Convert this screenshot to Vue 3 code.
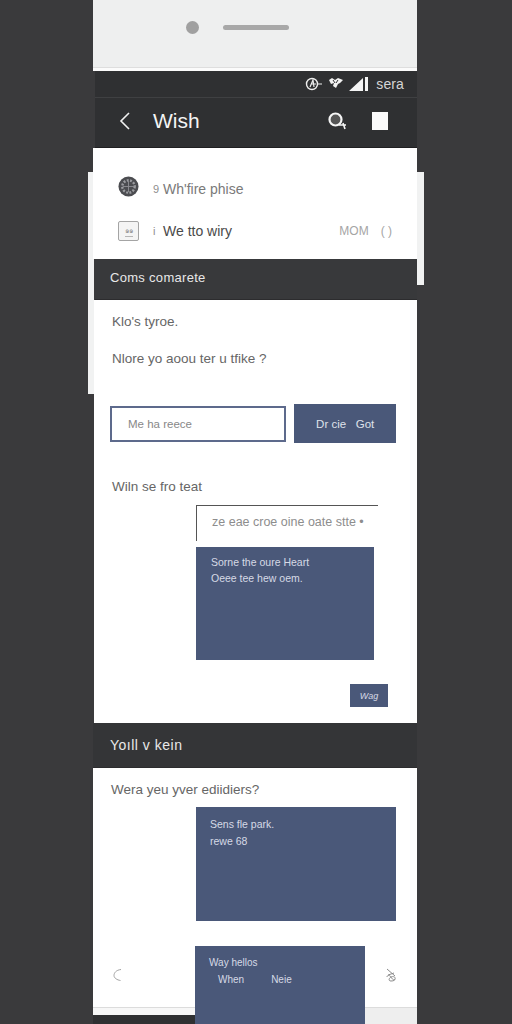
<template>
  <div class="page">
    <div class="ledge ledge-left"></div>
    <div class="ledge ledge-right"></div>

    <div class="phone">
      <!-- hardware top -->
      <div class="hardware">
        <span class="camera"></span>
        <span class="speaker"></span>
      </div>

      <div class="status">
        <svg class="st-icon" width="18" height="16" viewBox="0 0 18 16">
          <circle cx="7" cy="8" r="5.5" fill="none" stroke="#eee" stroke-width="1.4" />
          <path d="M5 11 8 4l1 7M6 8h5M12 8h5" fill="none" stroke="#eee" stroke-width="1.2" />
        </svg>
        <svg class="st-icon" width="16" height="14" viewBox="0 0 16 14">
          <path d="M1 3 4 1l3 2 3-2 5 2-3 3-2 1-2 4-3-2 1-3-3 1z" fill="#f2f2f2" />
          <path d="M5 3l2 3M10 3 8 6" stroke="#2f3032" stroke-width="1" />
        </svg>
        <svg class="st-icon" width="20" height="15" viewBox="0 0 20 15">
          <path d="M0 14 14 1v13zM16 0h3v14h-3z" fill="#f4f4f4" />
        </svg>
        <span class="st-text">sera</span>
      </div>

      <header class="appbar">
        <svg class="back" width="14" height="20" viewBox="0 0 14 20">
          <path d="M11 2 3 10l8 8" fill="none" stroke="#f2f2f2" stroke-width="1.6" />
        </svg>
        <span class="app-title">Wish</span>
        <svg class="search" width="22" height="22" viewBox="0 0 22 22">
          <circle cx="9.500" cy="9.500" r="6" fill="#555" stroke="#f5f5f5" stroke-width="2.200" />
          <path d="M13 15h7M17 13l2 6" stroke="#f5f5f5" stroke-width="1.600" fill="none" />
        </svg>
        <span class="square"></span>
      </header>

      <section class="list">
        <div class="list-row">
          <svg class="avatar" width="21" height="21" viewBox="0 0 22 22">
            <circle cx="11" cy="11" r="10.500" fill="#4b4c50" />
            <circle cx="11" cy="11" r="6.500" fill="none" stroke="#9b9ca0" stroke-width="2.500" stroke-dasharray="2 1.500" />
            <path d="M5 11h12M11 5v12" stroke="#8a8b8f" stroke-width="1" />
          </svg>
          <span class="bullet">9</span>
          <span class="row-text soft">Wh'fire phise</span>
        </div>
        <div class="list-row">
          <span class="box-icon"><i>๑๑</i></span>
          <span class="bullet">i</span>
          <span class="row-text">We tto wiry</span>
          <span class="row-meta">MOM</span>
          <span class="row-meta small">( )</span>
        </div>
      </section>

      <div class="band">Coms comarete</div>

      <section class="card first">
        <p class="q">Klo's tyroe.</p>
        <p class="q second">Nlore yo aoou ter u tfike ?</p>

        <div class="form-row">
          <div class="field">Me ha reece</div>
          <button class="go">Dr cie &nbsp; Got</button>
        </div>

        <p class="q third">Wiln se fro teat</p>

        <div class="thread">
          <div class="half-input">ze eae croe oine oate stte •</div>
          <div class="blue msg">
            <div>Sorne the oure Heart</div>
            <div>Oeee tee hew oem.</div>
          </div>
        </div>

        <div class="small-row">
          <button class="mini">Wag</button>
        </div>
      </section>

      <div class="band tall">Yoıll v kein</div>

      <section class="card last">
        <p class="q">Wera yeu yver ediidiers?</p>
        <div class="blue wide">
          <div>Sens fle park.</div>
          <div>rewe 68</div>
        </div>
        <div class="bottom-row">
          <svg class="moon" width="10" height="14" viewBox="0 0 10 14">
            <path d="M8 1.500C3 2 1 5 1 7.500S4 12 7.500 12.500" fill="none" stroke="#a3a3a3" stroke-width="1" />
          </svg>
          <div class="blue tail">
            <div>Way hellos</div>
            <div class="tail-line"><span>When</span><span>Neie</span></div>
          </div>
          <svg class="link" width="12" height="16" viewBox="0 0 12 16">
            <path d="M2 1l8 7M3 7l6-2M2 9c0-2 3-2 4 0s3 4 4 2-2-3-4-2-3 4 0 4 4-1 4-2" fill="none" stroke="#8b8b8b" stroke-width="1" />
          </svg>
        </div>
      </section>

      <footer class="foot"></footer>
    </div>
  </div>
</template>

<script setup>
</script>

<style>
body {
  background: #3a3a3c;
}
</style>

<style scoped>
* {
  box-sizing: border-box;
  margin: 0;
  font-family: "Liberation Sans", Arial, sans-serif;
}
.page {
  position: relative;
  width: 512px;
  height: 1024px;
  overflow: hidden;
  background: #3a3a3c;
}
.phone {
  position: relative;
  width: 324px;
  height: 1024px;
  margin-left: 93px;
  display: flex;
  flex-direction: column;
}

/* bits of the layer behind the card */
.ledge {
  position: absolute;
  top: 172px;
  background: #f1f2f2;
}
.ledge-left {
  left: 88px;
  width: 6px;
  height: 222px;
}
.ledge-right {
  left: 417px;
  width: 7px;
  height: 113px;
}

.hardware {
  height: 71px;
  padding-bottom: 14px;
  padding-left: 93px;
  background: #eeefef;
  border-bottom: 3px solid #fbfbfb;
  box-shadow: inset 0 -1px #dedede;
  display: flex;
  align-items: center;
  gap: 24px;
}
.camera {
  width: 13px;
  height: 13px;
  border-radius: 50%;
  background: #a0a0a0;
}
.speaker {
  width: 66px;
  height: 5px;
  border-radius: 3px;
  background: #a8a8a8;
}

.status {
  height: 27px;
  margin-left: 2px;
  padding-right: 13px;
  background: #2f3032;
  border-bottom: 1px solid #3f4042;
  display: flex;
  align-items: center;
  justify-content: flex-end;
  gap: 5px;
}
.st-text {
  margin-left: 2px;
  font-size: 14px;
  letter-spacing: 0.1px;
  color: #d5d5d5;
}

.appbar {
  height: 50px;
  margin-left: 2px;
  padding: 0 29px 4px 23px;
  background: #2f3032;
  border-bottom: 1px solid #1f1f21;
  display: flex;
  align-items: center;
}
.app-title {
  margin-left: 21px;
  font-size: 21px;
  color: #f4f4f4;
}
.search {
  margin-left: auto;
}
.square {
  width: 16px;
  height: 18px;
  margin-left: 24px;
  background: #fafafa;
}

.list {
  height: 111px;
  padding: 20px 25px 0 25px;
  background: #fff;
}
.list-row {
  height: 42px;
  display: flex;
  align-items: center;
}
.avatar {
  margin-top: -6px;
}
.box-icon {
  width: 21px;
  height: 20px;
  border: 1px solid #a4a4a4;
  border-radius: 2px;
  background: #f4f4f4;
  display: flex;
  align-items: center;
  justify-content: center;
}
.box-icon i {
  font-size: 7px;
  font-style: normal;
  color: #8a8a8a;
  border-bottom: 1px solid #b5b5b5;
}
.bullet {
  width: 10px;
  margin-left: 14px;
  font-size: 11px;
  color: #8e8e8e;
}
.row-text {
  font-size: 14px;
  color: #4a4a4a;
}
.row-text.soft {
  color: #7a7a7a;
}
.row-meta {
  margin-left: auto;
  font-size: 12px;
  color: #a5a5a5;
}
.row-meta.small {
  margin-left: 12px;
}

.band {
  height: 41px;
  padding-left: 15px;
  padding-bottom: 3px;
  margin-left: 2px;
  background: #38393b;
  border-bottom: 1px solid #2c2c2e;
  display: flex;
  align-items: center;
  font-size: 13px;
  letter-spacing: 0.3px;
  color: #e8e8e8;
}
.band.tall {
  height: 45px;
  padding-left: 17px;
  padding-bottom: 0;
  margin-left: 0;
  background: #343537;
  font-size: 14px;
  letter-spacing: 0.5px;
}

.card {
  padding: 0 21px 0 18px;
  background: #fff;
}
.card.first {
  height: 423px;
  margin-left: 1px;
}
.card.last {
  height: 239px;
}
.q {
  padding-top: 14px;
  font-size: 13.500px;
  line-height: 16px;
  color: #666;
}
.q.second {
  padding-top: 21px;
}
.q.third {
  padding-top: 36px;
}
.form-row {
  margin-top: 37px;
  margin-left: -2px;
  display: flex;
  align-items: center;
  gap: 8px;
}
.field {
  width: 177px;
  height: 36px;
  padding-left: 16px;
  border: 2px solid #5d6a8c;
  display: flex;
  align-items: center;
  font-size: 11.500px;
  color: #888;
}
.go {
  width: 102px;
  height: 39px;
  border: 0;
  background: #4a5879;
  font-size: 11.500px;
  color: #dfe2ea;
}
.thread {
  width: 182px;
  margin-top: 10px;
  margin-left: 84px;
}
.half-input {
  height: 36px;
  padding: 9px 0 0 15px;
  border-top: 1px solid #555;
  border-left: 1px solid #555;
  font-size: 12.500px;
  line-height: 14px;
  white-space: nowrap;
  color: #8d8d8d;
}
.blue {
  background: #4a5879;
  color: #d6dae6;
  font-size: 10.500px;
  line-height: 17px;
}
.msg {
  width: 178px;
  height: 113px;
  margin-top: 6px;
  padding: 7px 15px;
  line-height: 16px;
}
.small-row {
  margin-top: 24px;
  margin-right: 8px;
  display: flex;
  justify-content: flex-end;
}
.mini {
  width: 38px;
  height: 23px;
  border: 0;
  background: #4a5879;
  font-size: 9px;
  font-style: italic;
  color: #d6dae6;
}
.wide {
  width: 200px;
  height: 114px;
  margin: 9px 0 0 85px;
  padding: 9px 14px;
}
.bottom-row {
  margin-top: 25px;
  margin-left: 2px;
  display: flex;
  align-items: flex-start;
}
.moon {
  margin-top: 22px;
}
.tail {
  position: relative;
  z-index: 1;
  width: 170px;
  height: 90px;
  margin-left: 72px;
  padding: 8px 14px;
  font-size: 10px;
}
.tail-line {
  padding-left: 9px;
  display: flex;
  gap: 27px;
}
.link {
  margin-top: 22px;
  margin-left: auto;
  margin-right: -1px;
}
.foot {
  height: 17px;
  border-top: 1px solid #dcdcdc;
  background: linear-gradient(#f7f7f7 7px, #2f3032 7px);
  position: relative;
}
.foot::after {
  content: '';
  position: absolute;
  top: 0;
  bottom: 0;
  right: 0;
  width: 52px;
  background: #eeeeee;
}
</style>
